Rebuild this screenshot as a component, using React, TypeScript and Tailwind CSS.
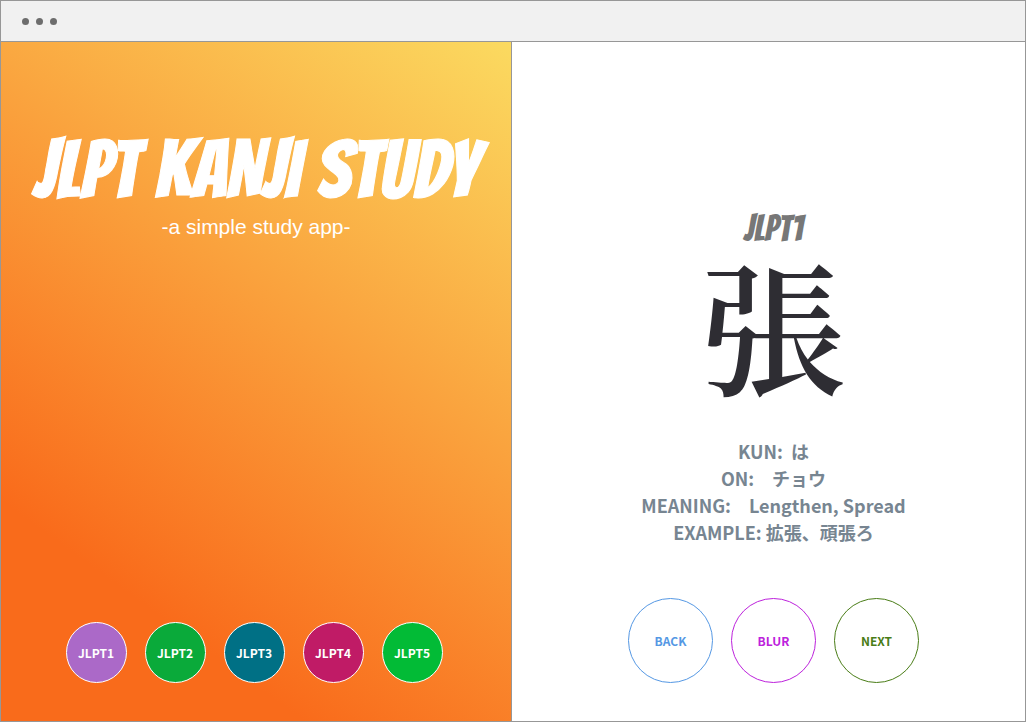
const levels = [
  { label: "JLPT1", color: "bg-[#ab69c8]" },
  { label: "JLPT2", color: "bg-[#0aaa3a]" },
  { label: "JLPT3", color: "bg-[#007085]" },
  { label: "JLPT4", color: "bg-[#c01b66]" },
  { label: "JLPT5", color: "bg-[#02bb36]" },
];

const actions = [
  { label: "BACK", color: "border-[#5598e4] text-[#5598e4]" },
  { label: "BLUR", color: "border-[#bd22dc] text-[#bd22dc]" },
  { label: "NEXT", color: "border-[#4a7d17] text-[#4a7d17]" },
];

const details = [
  "KUN:\u00a0 は",
  "ON:　チョウ",
  "MEANING:　Lengthen, Spread",
  "EXAMPLE: 拡張、頑張ろ",
];

function TitleBar() {
  return (
    <header className="flex h-10 shrink-0 items-center gap-[7px] bg-[#f1f1f1] px-[21px]">
      <span className="size-[7px] rounded-full bg-[#6d6d6d]" />
      <span className="size-[7px] rounded-full bg-[#6d6d6d]" />
      <span className="size-[7px] rounded-full bg-[#6d6d6d]" />
    </header>
  );
}

function Sidebar() {
  return (
    <section className="flex flex-col items-center justify-between border-r border-[#979797] bg-[linear-gradient(36deg,#f96b1b_21%,#fbda60_100%)] pt-[88px] pb-[38px] text-white">
      <div className="text-center">
        <h1 className="font-['Bangers','Liberation_Sans',sans-serif] text-[80px] leading-[80px] font-normal whitespace-nowrap [-webkit-text-stroke:1px_white]">
          JLPT KANJI STUDY
        </h1>
        <p className="font-['Liberation_Sans',sans-serif] text-[21px] leading-[34px]">
          -a simple study app-
        </p>
      </div>
      <nav className="flex gap-[18px] pr-1">
        {levels.map(({ label, color }) => (
          <button
            key={label}
            type="button"
            className={`size-[61px] rounded-full border border-white text-xs font-bold ${color}`}
          >
            {label}
          </button>
        ))}
      </nav>
    </section>
  );
}

function Card() {
  return (
    <section className="flex flex-col items-center justify-between bg-white pt-[167px] pb-[38px] pl-[10px]">
      <div className="text-center">
        <h2 className="font-['Bangers','Liberation_Sans',sans-serif] text-4xl font-normal text-[#777777]">
          JLPT1
        </h2>
        <p
          lang="ja"
          className="font-['Noto_Serif_CJK_JP','Noto_Sans_CJK_JP',serif] text-[143px] leading-[148px] font-semibold text-[#2e2d33]"
        >
          張
        </p>
        <div className="pt-[41px] text-lg leading-[27px] font-bold text-[#778591]">
          {details.map((line) => (
            <p key={line} lang="ja">
              {line}
            </p>
          ))}
        </div>
      </div>
      <div className="flex gap-[18px]">
        {actions.map(({ label, color }) => (
          <button
            key={label}
            type="button"
            className={`size-[85px] rounded-full border text-xs font-bold ${color}`}
          >
            {label}
          </button>
        ))}
      </div>
    </section>
  );
}

export default function App() {
  return (
    <div className="flex min-h-screen flex-col border border-[#979797] font-['Noto_Sans_CJK_JP',sans-serif]">
      <TitleBar />
      <main className="grid flex-1 grid-cols-[calc(50%-1px)_1fr] border-t border-[#979797]">
        <Sidebar />
        <Card />
      </main>
    </div>
  );
}
